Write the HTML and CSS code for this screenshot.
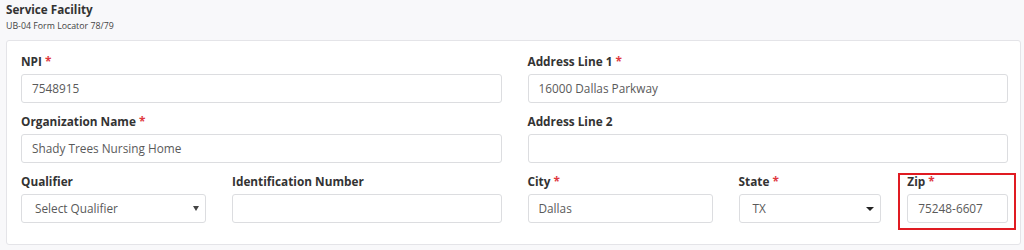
FILE: index.html
```html
<!DOCTYPE html>
<html lang="en">
<head>
<meta charset="utf-8">
<title>Service Facility</title>
<link rel="stylesheet" href="styles.css">
</head>
<body>
<div class="page">
  <div class="header">
    <div class="title">Service Facility</div>
    <div class="subtitle">UB-04 Form Locator 78/79</div>
  </div>
  <div class="card">
    <div class="halves">
      <div class="half">
        <div class="field">
          <label class="label">NPI <span class="req">*</span></label>
          <div class="input">7548915</div>
        </div>
        <div class="field">
          <label class="label">Organization Name <span class="req">*</span></label>
          <div class="input">Shady Trees Nursing Home</div>
        </div>
        <div class="row row-left">
          <div class="field">
            <label class="label">Qualifier</label>
            <div class="input select">
              <span>Select Qualifier</span>
              <svg class="caret small" viewBox="0 0 6 5" width="6" height="5"><path d="M0 0H6L3 5Z" fill="#444"/></svg>
            </div>
          </div>
          <div class="field">
            <label class="label">Identification Number</label>
            <div class="input"></div>
          </div>
        </div>
      </div>
      <div class="half">
        <div class="field">
          <label class="label">Address Line 1 <span class="req">*</span></label>
          <div class="input">16000 Dallas Parkway</div>
        </div>
        <div class="field">
          <label class="label">Address Line 2</label>
          <div class="input"></div>
        </div>
        <div class="row row-right">
          <div class="field">
            <label class="label">City <span class="req">*</span></label>
            <div class="input">Dallas</div>
          </div>
          <div class="field">
            <label class="label">State <span class="req">*</span></label>
            <div class="input select">
              <span>TX</span>
              <svg class="caret" viewBox="0 0 8 4" width="8" height="4"><path d="M0 0H8L4 4Z" fill="#222"/></svg>
            </div>
          </div>
          <div class="field highlight">
            <label class="label">Zip <span class="req">*</span></label>
            <div class="input">75248-6607</div>
          </div>
        </div>
      </div>
    </div>
  </div>
</div>
</body>
</html>
```
FILE: styles.css
```css
html, body {
  margin: 0;
  padding: 0;
  background: #f8f8fa;
  font-family: "Open Sans", "Noto Sans", sans-serif;
  color: #333;
}
.page {
  width: 1024px;
  height: 250px;
  padding: 0 3px 0 6px;
  box-sizing: border-box;
  overflow: hidden;
}
.header {
  padding-top: 1px;
  height: 40px;
  box-sizing: border-box;
}
.title {
  font-size: 11.7px;
  font-weight: 700;
  line-height: 16px;
  color: #333;
}
.subtitle {
  font-size: 8.8px;
  line-height: 14px;
  margin-top: 2px;
  color: #444;
}
.card {
  background: #fff;
  border: 1px solid #e4e4e8;
  border-radius: 3px;
  padding: 12px 12px 12px 14px;
  width: 1015px;
  height: 205px;
  box-sizing: border-box;
}
.halves {
  display: flex;
  gap: 26px;
}
.half {
  flex: 1 1 0;
  min-width: 0;
}
.row {
  display: grid;
  column-gap: 26px;
}
.row-left {
  grid-template-columns: calc(5 / 12 * (100% + 26px) - 26px) 1fr;
}
.row-right {
  grid-template-columns: calc(5 / 12 * (100% + 26px) - 26px) calc(4 / 12 * (100% + 26px) - 26px) 1fr;
}
.field {
  margin-bottom: 10px;
  position: relative;
}
.label {
  display: block;
  font-size: 11.8px;
  font-weight: 700;
  line-height: 16px;
  margin-bottom: 5px;
  color: #333;
}
.req {
  color: #e0383e;
  font-weight: 700;
}
.input {
  height: 29px;
  box-sizing: border-box;
  border: 1px solid #dcdde0;
  border-radius: 3px;
  padding: 0 10px;
  font-size: 11.8px;
  line-height: 27px;
  color: #5a5a5a;
  background: #fff;
  display: flex;
  align-items: center;
  justify-content: space-between;
  white-space: nowrap;
}
.select {
  padding-left: 13px;
  padding-right: 6px;
}
.caret {
  display: block;
}
.highlight::after {
  content: "";
  position: absolute;
  left: -9px;
  right: -8px;
  top: 0;
  bottom: -7px;
  border: 2px solid #e01b22;
  pointer-events: none;
}
```
